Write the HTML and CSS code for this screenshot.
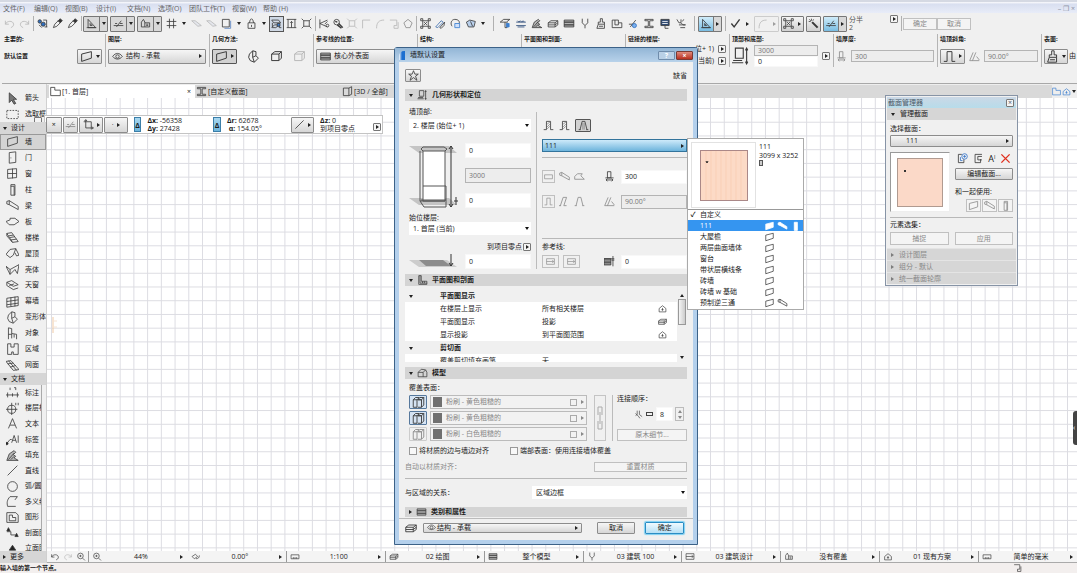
FILE: index.html
```html
<!DOCTYPE html>
<html lang="zh-CN">
<head>
  <meta charset="UTF-8">
  <meta name="viewport" content="width=device-width, initial-scale=1">
  <title>墙默认设置</title>
  <link rel="stylesheet" href="styles.css">
</head>
<body>
  <svg class="sprite" aria-hidden="true">
    <symbol id="undo" viewBox="0 0 16 16"><path d="M2 4v5h5M2 9c2-5 11-6 12 0 0 3-2 4-4 5"/></symbol>
    <symbol id="redo" viewBox="0 0 16 16"><path d="M14 4v5H9M14 9C12 4 3 3 2 9c0 3 2 4 4 5"/></symbol>
    <symbol id="find" viewBox="0 0 16 16"><circle cx="4" cy="5" r="2.5" fill="#2f6fc0"/><circle cx="9" cy="9" r="3" fill="#2f6fc0"/><path d="M9 3h5v10M11 13h4M3 10l4 4"/></symbol>
    <symbol id="pick" viewBox="0 0 16 16"><path d="M2 14l2-5 5-5 3 3-5 5z"/><path d="M9 4l3-3 3 3-3 3z" fill="#333"/></symbol>
    <symbol id="setsq" viewBox="0 0 16 16"><path d="M3 2v12h11zM6 8v3h3zM1 14h14"/></symbol>
    <symbol id="snapline" viewBox="0 0 16 16"><path d="M1 11h14M5 13L12 4M3 8h3M10 8h4"/></symbol>
    <symbol id="ruler" viewBox="0 0 16 16"><path d="M2 6l3-4 2 4v7H2zM7 7h7v6H7M9 9h3M9 11h3"/></symbol>
    <symbol id="hash" viewBox="0 0 16 16"><path d="M5 1v14M11 1v14M1 5h14M1 11h14"/></symbol>
    <symbol id="sheet" viewBox="0 0 16 16"><path d="M1 4l9 8 5-1-9-7z" fill="#ccd4e8"/></symbol>
    <symbol id="frame" viewBox="0 0 16 16"><path d="M2 2h10v11H2z"/><path d="M14 4v11H5" stroke="#5b83c0"/></symbol>
    <symbol id="lock" viewBox="0 0 16 16"><path d="M3 7h10v8H3zM5 7l1-4 2-2 2 2 1 4M8 10v3"/></symbol>
    <symbol id="fold" viewBox="0 0 16 16"><path d="M1 3h10l3 4H4zM2 7v7h5l5-4v4h3M5 10h6M1 14l4-4"/><path d="M9 8h4v4H9z" fill="#3c7fd0"/></symbol>
    <symbol id="dims" viewBox="0 0 16 16"><path d="M1 2h14M1 14h14M3 2v12M8 5v9M13 2v12M6 7l2-2 2 2"/></symbol>
    <symbol id="xpand" viewBox="0 0 16 16"><path d="M4 4h8v8H4zM1 1l3 3M15 1l-3 3M1 15l3-3M15 15l-3-3"/></symbol>
    <symbol id="trim" viewBox="0 0 16 16"><path d="M2 2v13M2 8l11-5M2 8l11 5M9 9l4-4"/><circle cx="13" cy="11" r="2"/></symbol>
    <symbol id="wrench" viewBox="0 0 16 16"><circle cx="6" cy="6" r="4"/><path d="M9 8l6 6M7 10l6 5M4 5l3 1" stroke-width="2"/></symbol>
    <symbol id="corner" viewBox="0 0 16 16"><path d="M3 15V3h11"/></symbol>
    <symbol id="origin" viewBox="0 0 16 16"><path d="M4 1v12h11M1 4h11v11M2 3l2-2 2 2M13 11l2 2-2 2"/></symbol>
    <symbol id="curve" viewBox="0 0 16 16"><path d="M3 15C3 7 6 3 14 3"/></symbol>
    <symbol id="box2" viewBox="0 0 16 16"><path d="M2 3h10v8H8v4h6V6"/></symbol>
    <symbol id="penta" viewBox="0 0 16 16"><path d="M8 2l6 5-3 7H5L2 7z"/></symbol>
    <symbol id="group" viewBox="0 0 16 16"><path d="M4 4h8v8H4zM1 1h3v3H1zM12 1h3v3h-3zM1 12h3v3H1zM12 12h3v3h-3zM6 6l4 4M10 6l-4 4"/></symbol>
    <symbol id="pencils" viewBox="0 0 16 16"><path d="M1 13l8-9 3 2-8 8z" stroke="#3f6fae"/><path d="M7 14l7-8-1 5-4 4z"/></symbol>
    <symbol id="cloud" viewBox="0 0 16 16"><path d="M3 12C0 8 2 2 7 2s8 3 6 7"/><path d="M7 8h7v6H7z" stroke="#3c7fd0" fill="#cfe0fa"/></symbol>
    <symbol id="tag" viewBox="0 0 16 16"><path d="M2 6l5-3 8 2-2 8H5z" fill="#b9d0ec"/><path d="M8 5l3 7"/></symbol>
    <symbol id="roofs" viewBox="0 0 16 16"><path d="M1 6l5-4h9L10 6zM8 6v8h3V6"/><path d="M10 8h4v5h-4z" fill="#3c7fd0" stroke="#3c7fd0"/></symbol>
    <symbol id="waves" viewBox="0 0 16 16"><path d="M1 6h14M1 11h14M3 4l2 2 2-2 2 2 2-2 2 2M3 13h10" stroke="#2b4a7a"/></symbol>
    <symbol id="fill" viewBox="0 0 16 16"><path d="M1 14L4 6l6-4 2 2-3 3 3 2-2 2 5 3z" fill="#b7b7b7"/><path d="M3 13l7-8M6 13l4-4"/></symbol>
    <symbol id="layers" viewBox="0 0 16 16"><path d="M1 7l4-3h10l-4 3zM1 10h10l4-3M1 13h10l4-3M1 7v6M11 7v6M15 4v6"/></symbol>
    <symbol id="hatch" viewBox="0 0 16 16"><path d="M1 3h14v10H1z" fill="#b4b4b4"/><path d="M1 6h14M1 10h14" stroke-width="1.6"/></symbol>
    <symbol id="fork" viewBox="0 0 16 16"><path d="M4 1v6l4 4 4-4V1M8 11v4"/></symbol>
    <symbol id="brush" viewBox="0 0 16 16"><path d="M7 1h3v5h3v3H4V6h3zM4 9l-2 6h11V9M5 12h6"/></symbol>
    <symbol id="rooms" viewBox="0 0 16 16"><path d="M1 3h9v4h5v7H1zM5 3v7h5V7"/></symbol>
    <symbol id="beamI" viewBox="0 0 16 16"><path d="M2 2h12v2H9v8h5v2H2v-2h5V4H2z"/></symbol>
    <symbol id="panel" viewBox="0 0 16 16"><path d="M2 2h12v9H2z" fill="#2f4a73"/><path d="M4 5h8M4 8h8" stroke="#fff"/><path d="M8 11v4h5"/></symbol>
    <symbol id="plug" viewBox="0 0 16 16"><path d="M2 2l3 5h3M8 2v5l3 3h4M5 10h9M7 14h7M12 2l-2 3"/></symbol>
    <symbol id="cut" viewBox="0 0 16 16"><path d="M2 9h9M4 13l8-10"/><circle cx="10" cy="11" r="3" fill="#7bb0ee" stroke="#2f6fc0"/></symbol>
    <symbol id="check" viewBox="0 0 16 16"><path d="M2 8l4 5 8-11" stroke-width="2"/></symbol>
    <symbol id="wand" viewBox="0 0 16 16"><path d="M6 6l8 8" stroke-width="3"/><path d="M5 1v3M1 5h3M2 2l2 2M8 2L7 4"/></symbol>
    <symbol id="eye" viewBox="0 0 16 16"><path d="M1 8c4-6 10-6 14 0-4 5-10 5-14 0z"/><circle cx="8" cy="8" r="2.5"/></symbol>
    <symbol id="star" viewBox="0 0 16 16"><path d="M8 1l2 5h5l-4 3 2 6-5-4-5 4 2-6-4-3h5z"/></symbol>
    <symbol id="cube" viewBox="0 0 16 16"><path d="M2 5l4-3h8v8l-3 3H2zM2 5h9v8M11 5l3-3"/></symbol>
    <symbol id="model" viewBox="0 0 16 16"><path d="M1 7l5-5 7 1 2 4v7H1zM1 7h8v7M9 7l4-4"/></symbol>
    <symbol id="cubes" viewBox="0 0 16 16"><path d="M1 5h5v10H1zM6 5l3-3H4L1 5M7 5l3-3h5l-3 3zM7 5h5v10H7M12 15l3-3V2"/></symbol>
    <symbol id="arrow" viewBox="0 0 16 16"><path d="M4 1v12l3-3 3 5 2-1-3-5h4z" fill="#777"/></symbol>
    <symbol id="marquee" viewBox="0 0 16 16"><path d="M1 3h14v10H1z" stroke-dasharray="2 1.5"/></symbol>
    <symbol id="wall" viewBox="0 0 16 16"><path d="M2 5l12-3v8L2 14z"/></symbol>
    <symbol id="door" viewBox="0 0 16 16"><path d="M4 2l8-1v13l-8 1zM6 8v1"/></symbol>
    <symbol id="window" viewBox="0 0 16 16"><path d="M2 3l11-1v11L2 14zM8 2v12M2 8h11"/></symbol>
    <symbol id="column" viewBox="0 0 16 16"><path d="M6 2h5v13H6zM6 4h4v11"/></symbol>
    <symbol id="beam" viewBox="0 0 16 16"><path d="M1 3l3-1 11 7v4L4 7 1 6zM4 2v5"/></symbol>
    <symbol id="slab" viewBox="0 0 16 16"><path d="M0 8l5-2V4l6 0 5 4-6 4H4z"/></symbol>
    <symbol id="stair" viewBox="0 0 16 16"><path d="M1 3l6-1 8 11-7 1zM3 6l6-1M5 8l6-1M6 11l7-1M1 3v3l7 8"/></symbol>
    <symbol id="roof" viewBox="0 0 16 16"><path d="M0 9l5-6 7-1-3 8-4 3zM12 2l4 8-3 1-2-4"/></symbol>
    <symbol id="shell" viewBox="0 0 16 16"><path d="M0 4l5 4 11-6-2 11-3-5-6 6zM5 8v6"/></symbol>
    <symbol id="skylight" viewBox="0 0 16 16"><path d="M1 4l6-2 8 5-6 2zM1 8l8 5 6-2M1 4v4M4 8l6-2"/></symbol>
    <symbol id="curtain" viewBox="0 0 16 16"><path d="M1 4l14-2v11L1 15zM6 3v11M11 2v12M1 8l14-2M1 12l14-2"/></symbol>
    <symbol id="morph" viewBox="0 0 16 16"><path d="M3 5l4-4 4 1v5l3 3-5 5-5-2-2-4zM7 1v8l2 6M7 9l4-2"/></symbol>
    <symbol id="chair" viewBox="0 0 16 16"><path d="M3 1l4 1v6l6 1v6M3 1v14M7 8v6M3 9h4M10 9v4"/></symbol>
    <symbol id="zone" viewBox="0 0 16 16"><path d="M2 1h4v4h4V1h5v13H9v-3H7v3H2z"/></symbol>
    <symbol id="mesh" viewBox="0 0 16 16"><path d="M0 3l6-1 10 11-7 1zM3 2l10 12M2 6l7-1M5 10l7-2"/></symbol>
    <symbol id="dim" viewBox="0 0 16 16"><path d="M0 11h16M2 8v6M8 9v4M14 8v6M5 2v3M10 2h2v3"/></symbol>
    <symbol id="level" viewBox="0 0 16 16"><circle cx="7" cy="9" r="5"/><path d="M7 1v15M0 9h14M12 1v3M15 1v3"/></symbol>
    <symbol id="letterA" viewBox="0 0 16 16"><path d="M3 14L8 2l5 12M5 10h6"/></symbol>
    <symbol id="labelA" viewBox="0 0 16 16"><path d="M0 14l5-6 2 0M7 12l3-9 3 9M8 9h4M15 3v9"/><circle cx="1" cy="13" r="1.5" fill="#222"/></symbol>
    <symbol id="line" viewBox="0 0 16 16"><path d="M2 14L14 2"/></symbol>
    <symbol id="circle" viewBox="0 0 16 16"><circle cx="8" cy="8" r="6"/></symbol>
    <symbol id="poly" viewBox="0 0 16 16"><path d="M14 2H5C1 6 1 10 2 14h10M14 2l-3 4"/></symbol>
    <symbol id="drawing" viewBox="0 0 16 16"><path d="M1 2h11l3 3v9H1zM4 5h4v3h4v4H4z"/></symbol>
    <symbol id="section" viewBox="0 0 16 16"><path d="M1 7h5v4h6"/><path d="M1 6l2-4 2 4zM11 13l2-4 2 4z" fill="#222"/></symbol>
    <symbol id="elev" viewBox="0 0 16 16"><path d="M4 10l4-6 4 6z" fill="#222"/><path d="M1 13h14"/></symbol>
    <symbol id="planview" viewBox="0 0 16 16"><path d="M2 1h4v9h9v5H2zM4 1v12h11M8 10v3M11 10v3"/></symbol>
    <symbol id="tabplan" viewBox="0 0 16 16"><path d="M1 2h6v4h8v8H1z"/></symbol>
    <symbol id="tab3d" viewBox="0 0 16 16"><path d="M2 3h8v11H2zM10 3l4-2v11l-4 2"/></symbol>
    <symbol id="zoomin" viewBox="0 0 16 16"><circle cx="7" cy="7" r="5"/><path d="M11 11l4 4M5 7h4M7 5v4"/></symbol>
    <symbol id="wallH" viewBox="0 0 16 16"><path d="M5 2h6v12M5 2v12M1 14h4M11 14h4"/><path d="M6 6l4-3M6 10l4-4M6 13l4-4" stroke="#888"/></symbol>
    <symbol id="wallT" viewBox="0 0 16 16"><path d="M6 2h4l3 12M6 2L3 14M1 14h3M12 14h3"/><path d="M7 4v10M9 4v10" stroke="#888"/></symbol>
    <symbol id="slant" viewBox="0 0 16 16"><path d="M2 14L6 2h5L7 14M0 14h3M7 14h4"/></symbol>
    <symbol id="trapez" viewBox="0 0 16 16"><path d="M6 2h4l3 12M6 2L3 14M1 14h3M12 14h3"/></symbol>
    <symbol id="wallO" viewBox="0 0 16 16"><path d="M5 2h6v12h4M5 2v12H1"/></symbol>
    <symbol id="angle" viewBox="0 0 16 16"><path d="M1 14L6 2M5 14l5-12M1 14h14M11 8l4 5"/></symbol>
    <symbol id="flat" viewBox="0 0 16 16"><path d="M1 5h14v7H1z"/></symbol>
    <symbol id="bent" viewBox="0 0 16 16"><path d="M1 12V8l4-4h7l-2 3 5 5z"/></symbol>
    <symbol id="thick" viewBox="0 0 16 16"><path d="M5 1h5v9H5zM2 10h12M3 13h10M3 13l2-2M3 13l2 2M13 13l-2-2M13 13l-2 2"/></symbol>
    <symbol id="copy" viewBox="0 0 16 16"><path d="M13 2H3v12h8V9M13 5H7v5h6"/></symbol>
    <symbol id="newcopy" viewBox="0 0 16 16"><path d="M7 2H2v12h8V9"/><circle cx="11" cy="5" r="4" stroke="#3473c8"/><path d="M9 5h4M11 3v4M5 6v5h3" stroke="#3473c8"/></symbol>
    <symbol id="cross" viewBox="0 0 16 16"><path d="M2 2l12 12M14 2L2 14" stroke-width="2"/></symbol>
    <symbol id="height" viewBox="0 0 16 16"><path d="M3 1h7v9H3zM0 14h10M1 12h8M13 1v14M12 3l1-2 1 2M12 13l1 2 1-2"/></symbol>
    <symbol id="refline" viewBox="0 0 16 16"><path d="M1 3h14v10H1zM1 8h12M11 6l3 2-3 2"/></symbol>
    <symbol id="offset" viewBox="0 0 16 16"><path d="M0 4h10v9H0z" fill="#8a8a8a"/><path d="M0 4h15M0 9h10M13 0v15M11 6h4"/></symbol>
    <symbol id="compass" viewBox="0 0 16 16"><path d="M1 8l6-4 4 4-6 4zM8 12c4 0 6-2 6-6"/></symbol>
    <symbol id="scale" viewBox="0 0 16 16"><path d="M1 5h14v7H1zM5 9v3M8 9v3M11 9v3"/></symbol>
    <symbol id="join" viewBox="0 0 20 16"><path d="M4 1v7l-3 2M8 1v7l5 4M1 6l5 5 3 4"/></symbol>
    <symbol id="house" viewBox="0 0 16 16"><path d="M2 8l6-5 6 5v6H2zM8 7v5M6 10h4"/></symbol>
    <symbol id="chain" viewBox="0 0 8 28"><path d="M2 11V3h4v8M2 17v8h4v-8M4 8v12"/></symbol>
  </svg>

  <header class="menubar">
    <nav>
      <a href="#">文件(F)</a><a href="#">编辑(Q)</a><a href="#">视图(B)</a><a href="#">设计(I)</a><a href="#">文档(N)</a><a href="#">选项(O)</a><a href="#" class="wide">团队工作(T)</a><a href="#">视窗(W)</a><a href="#">帮助 (H)</a>
    </nav>
    <span class="win-ctl">– ❐ ×</span>
  </header>

  <div class="toolbar">
    <svg class="i dim"><use href="#undo"/></svg><svg class="i dim"><use href="#redo"/></svg>
    <i class="sep"></i>
    <svg class="i"><use href="#find"/></svg><svg class="i"><use href="#pick"/></svg><svg class="i"><use href="#pick"/></svg>
    <i class="sep"></i>
    <span class="split"><button aria-label="辅助线"><svg class="i"><use href="#setsq"/></svg></button><button aria-label="更多"><i class="down"></i></button></span>
    <span class="split"><button aria-label="捕捉"><svg class="i"><use href="#snapline"/></svg></button><button aria-label="更多"><i class="down"></i></button></span>
    <span class="split"><button aria-label="标尺"><svg class="i"><use href="#ruler"/></svg></button><button aria-label="更多"><i class="down"></i></button></span>
    <svg class="i"><use href="#hash"/></svg><span class="caret"><i class="down"></i></span>
    <svg class="i dim"><use href="#sheet"/></svg><svg class="i dim"><use href="#sheet"/></svg>
    <svg class="i"><use href="#frame"/></svg><span class="caret"><i class="down"></i></span>
    <svg class="i"><use href="#lock"/></svg><span class="caret"><i class="down"></i></span>
    <button class="on" aria-label="描绘"><svg class="i"><use href="#fold"/></svg></button>
    <svg class="i"><use href="#dims"/></svg><svg class="i"><use href="#xpand"/></svg>
    <i class="sep"></i>
    <span class="tight">
      <svg class="i"><use href="#trim"/></svg><svg class="i"><use href="#wrench"/></svg><svg class="i dim"><use href="#xpand"/></svg><svg class="i dim"><use href="#corner"/></svg><svg class="i dim"><use href="#curve"/></svg><svg class="i dim"><use href="#box2"/></svg><svg class="i mid"><use href="#penta"/></svg>
    </span>
    <i class="sep"></i>
    <svg class="i"><use href="#group"/></svg><svg class="i"><use href="#pencils"/></svg><svg class="i"><use href="#cloud"/></svg><svg class="i"><use href="#tag"/></svg><span class="caret"><i class="down"></i></span>
    <i class="sep far"></i>
    <span class="loose">
      <svg class="i"><use href="#roofs"/></svg><svg class="i"><use href="#waves"/></svg><svg class="i"><use href="#fill"/></svg><svg class="i"><use href="#layers"/></svg><svg class="i"><use href="#hatch"/></svg><svg class="i"><use href="#fork"/></svg><svg class="i"><use href="#brush"/></svg><svg class="i"><use href="#rooms"/></svg><svg class="i"><use href="#cut"/></svg><svg class="i"><use href="#beamI"/></svg><svg class="i"><use href="#panel"/></svg><svg class="i"><use href="#plug"/></svg>
    </span>
    <i class="sep far"></i>
    <span class="split blue"><button aria-label="三角板"><svg class="i"><use href="#setsq"/></svg></button><button aria-label="更多"><i class="right"></i></button></span>
    <i class="sep"></i>
    <span class="split plain"><button aria-label="确认"><svg class="i"><use href="#check"/></svg></button><button aria-label="更多"><i class="right"></i></button></span>
    <span class="split off"><button aria-label="曲线" disabled><svg class="i dim"><use href="#curve"/></svg></button><button aria-label="更多" disabled><i class="right"></i></button></span>
    <span class="split light"><button aria-label="组"><svg class="i"><use href="#group"/></svg></button><button aria-label="更多"><i class="right"></i></button></span>
    <span class="split light"><button aria-label="魔棒"><svg class="i"><use href="#wand"/></svg></button></span>
    <span class="split blue"><button aria-label="吸附"><svg class="i"><use href="#snapline"/></svg></button><button aria-label="更多"><i class="right"></i></button></span>
    <span class="half">分半<br>2</span>
    <button class="pop" aria-label="展开"><i class="right"></i></button>
    <i class="sep"></i>
    <button class="flat" disabled>确定</button><button class="flat" disabled>取消</button>
  </div>

  <div class="infobar">
    <section>
      <h2>主要的:</h2>
      <div class="row between"><b>默认设置</b><button class="btn chip" aria-label="墙"><svg class="i"><use href="#wall"/></svg><i class="down"></i></button></div>
    </section>
    <section>
      <h2>图层:</h2>
      <div class="row"><button class="btn grow"><svg class="i"><use href="#eye"/></svg>结构 - 承载<i class="right end"></i></button></div>
    </section>
    <section>
      <h2>几何方法:</h2>
      <div class="row spread"><button class="btn chip pressed" aria-label="直墙"><svg class="i"><use href="#wall"/></svg><i class="right"></i></button><svg class="i"><use href="#morph"/></svg><svg class="i"><use href="#cube"/></svg><svg class="i dim"><use href="#cube"/></svg></div>
    </section>
    <section>
      <h2>参考线的位置:</h2>
      <div class="row"><button class="btn grow"><svg class="i"><use href="#hatch"/></svg>核心外表面<i class="right end"></i></button></div>
    </section>
    <section><h2>结构:</h2></section>
    <section><h2>平面图和剖面:</h2></section>
    <section>
      <h2>链接的楼层:</h2>
      <div class="stories"><span>位+ 1)</span><button class="pop" aria-label="展开"><i class="right"></i></button><span>当前)</span><button class="pop" aria-label="展开"><i class="right"></i></button></div>
    </section>
    <section>
      <h2>顶部和底部:</h2>
      <div class="row"><svg class="i big"><use href="#height"/></svg><div class="stack"><input aria-label="高度" value="3000" disabled><input aria-label="底部" value="0"></div><button class="pop" aria-label="展开"><i class="right"></i></button></div>
    </section>
    <section>
      <h2>墙厚度:</h2>
      <div class="row"><svg class="i mid"><use href="#thick"/></svg><input aria-label="墙厚度" value="300" disabled></div>
    </section>
    <section>
      <h2>墙顶斜角:</h2>
      <div class="row"><button class="btn chip" aria-label="斜角"><svg class="i"><use href="#wallO"/></svg><i class="right"></i></button><svg class="i mid"><use href="#angle"/></svg><input aria-label="角度" value="90.00°" disabled></div>
    </section>
    <section class="surface">
      <h2>表面:</h2>
      <div class="row"><button class="btn chip" aria-label="表面"><svg class="i"><use href="#brush"/></svg><i class="down"></i></button>由</div>
    </section>
  </div>

  <main>
    <aside class="toolbox">
      <ul class="pickers">
        <li><svg class="i"><use href="#arrow"/></svg>箭头</li>
        <li><svg class="i"><use href="#marquee"/></svg>选取框</li>
      </ul>
      <h3><i class="down"></i>设计</h3>
      <ul class="design">
        <li class="active"><svg class="i"><use href="#wall"/></svg>墙</li>
        <li><svg class="i"><use href="#door"/></svg>门</li>
        <li><svg class="i"><use href="#window"/></svg>窗</li>
        <li><svg class="i"><use href="#column"/></svg>柱</li>
        <li><svg class="i"><use href="#beam"/></svg>梁</li>
        <li><svg class="i"><use href="#slab"/></svg>板</li>
        <li><svg class="i"><use href="#stair"/></svg>楼梯</li>
        <li><svg class="i"><use href="#roof"/></svg>屋顶</li>
        <li><svg class="i"><use href="#shell"/></svg>壳体</li>
        <li><svg class="i"><use href="#skylight"/></svg>天窗</li>
        <li><svg class="i"><use href="#curtain"/></svg>幕墙</li>
        <li><svg class="i"><use href="#morph"/></svg>变形体</li>
        <li><svg class="i"><use href="#chair"/></svg>对象</li>
        <li><svg class="i"><use href="#zone"/></svg>区域</li>
        <li><svg class="i"><use href="#mesh"/></svg>网面</li>
      </ul>
      <h3><i class="down"></i>文档</h3>
      <ul class="document">
        <li><svg class="i"><use href="#dim"/></svg>标注</li>
        <li><svg class="i"><use href="#level"/></svg>楼层标</li>
        <li><svg class="i"><use href="#letterA"/></svg>文本</li>
        <li><svg class="i"><use href="#labelA"/></svg>标签</li>
        <li><svg class="i"><use href="#fill"/></svg>填充</li>
        <li><svg class="i"><use href="#line"/></svg>直线</li>
        <li><svg class="i"><use href="#circle"/></svg>弧/圆</li>
        <li><svg class="i"><use href="#poly"/></svg>多义线</li>
        <li><svg class="i"><use href="#drawing"/></svg>图形</li>
        <li><svg class="i"><use href="#section"/></svg>剖面图</li>
        <li><svg class="i"><use href="#elev"/></svg>立面图</li>
      </ul>
      <h3 class="more"><i class="right"></i>更多</h3>
    </aside>

    <div class="workspace">
      <div class="tabs">
        <span class="tab current"><svg class="i"><use href="#tabplan"/></svg>[1. 首层]<button aria-label="关闭">×</button></span>
        <span class="tab"><svg class="i"><use href="#beamI"/></svg>[自定义截面]</span>
        <span class="tab"><svg class="i"><use href="#tab3d"/></svg>[3D / 全部]</span>
        <span class="nav-home"><svg class="i"><use href="#tabplan"/></svg><svg class="i"><use href="#house"/></svg><i class="down"></i></span>
      </div>
      <div class="canvas">
        <svg class="grid" aria-hidden="true">
          <defs><pattern id="cell" x="4" y="10" width="13.73" height="13.73" patternUnits="userSpaceOnUse"><path d="M.5 0v13.73M0 .5h13.73" fill="none" stroke="#dcdce2"/></pattern></defs>
          <rect width="100%" height="100%" fill="url(#cell)"/>
          <path d="M6 219v16" stroke="#efc9a4" stroke-width="1" fill="none"/>
          <path d="M5 223h5M5 229h5" stroke="#f6e3d2" fill="none"/>
        </svg>
        <span class="edge-tab">‹</span>
      </div>
      <footer class="statusbar">
        <div class="zooms"><svg class="i"><use href="#undo"/></svg><svg class="i dim"><use href="#redo"/></svg><svg class="i"><use href="#zoomin"/></svg></div>
        <div><svg class="i"><use href="#zoomin"/></svg><span>44%</span><i class="right"></i></div>
        <div class="open"><svg class="i"><use href="#compass"/></svg><span>0.00°</span><i class="right"></i></div>
        <div><svg class="i"><use href="#scale"/></svg><span>1:100</span><i class="right"></i></div>
        <div><svg class="i"><use href="#layers"/></svg><span>02 绘图</span><i class="right"></i></div>
        <div><svg class="i"><use href="#hatch"/></svg><span>整个模型</span><i class="right"></i></div>
        <div><svg class="i"><use href="#fork"/></svg><span>03 建筑 100</span><i class="right"></i></div>
        <div><svg class="i"><use href="#refline"/></svg><span>03 建筑设计</span><i class="right"></i></div>
        <div><svg class="i"><use href="#ruler"/></svg><span>没有覆盖</span><i class="right"></i></div>
        <div><svg class="i"><use href="#house"/></svg><span>01 现有方案</span><i class="right"></i></div>
        <div><svg class="i"><use href="#scale"/></svg><span>简单的毫米</span><i class="right"></i></div>
      </footer>
    </div>
  </main>
  <div class="hint"><span>输入墙的第一个节点。</span><svg class="i"><use href="#box2"/></svg></div>

  <!-- coordinate tracker -->
  <div class="tracker">
    <button class="btn" aria-label="关闭">×</button>
    <button class="btn" aria-label="网格"><svg class="i mid"><use href="#snapline"/></svg></button>
    <button class="btn wide" aria-label="原点"><svg class="i"><use href="#origin"/></svg><i class="right"></i></button>
    <button class="btn wide" aria-label="点">·<i class="right"></i></button>
    <b class="delta">Δ</b>
    <p><b>Δx:</b> -56358<br><b>Δy:</b> 27428</p>
    <b class="delta">Δ</b>
    <p><b>Δr:</b> 62678<br>&nbsp;<b>α:</b> 154.05°</p>
    <button class="btn wide" aria-label="高程"><svg class="i"><use href="#line"/></svg><i class="right"></i></button>
    <p class="last"><b>Δz:</b> 0<br>到项目零点</p>
    <button class="pop" aria-label="展开"><i class="right"></i></button>
  </div>
  <button class="pop tracker-pin" aria-label="固定"></button>

  <!-- wall settings dialog -->
  <div class="dialog" role="dialog" aria-label="墙默认设置">
    <div class="titlebar"><i class="logo"></i><span>墙默认设置</span><button aria-label="帮助">?</button><button class="close" aria-label="关闭">×</button></div>
    <div class="body">
      <div class="fav"><button class="btn" aria-label="收藏"><svg class="i"><use href="#star"/></svg></button><span>缺省</span></div>

      <h4><i class="down"></i><svg class="i"><use href="#height"/></svg>几何形状和定位</h4>
      <div class="geometry">
        <div class="left">
          <label for="top">墙顶部:</label>
          <div class="drop"><select id="top"><option>2. 楼层 (始位+ 1)</option></select></div>
          <div class="model">
            <svg class="wall-pic" viewBox="0 0 50 66" aria-hidden="true">
              <path d="M0 3h40l8 7H10zM0 55h40l8 7H10z" fill="#c4c4c4"/>
              <path d="M14 8h22v50H14z" fill="#fff" stroke="#555"/>
              <path d="M14 8l-2-2 2-2h21l3 2-2 2M11 8v50M14 43h23v14M11 58l4 6h22v-7H12M11 58h25" fill="none" stroke="#555"/>
              <path d="M42 3v61M40 6l2-3 2 3M40 61l2 3 2-3M47 54v8M45 58h4" fill="none" stroke="#333"/>
            </svg>
            <div class="inputs"><input aria-label="顶部偏移" value="0"><input aria-label="墙高" value="3000" disabled><input aria-label="底部偏移" value="0"></div>
          </div>
          <label for="home">始位楼层:</label>
          <div class="drop"><select id="home"><option>1. 首层 (当前)</option></select></div>
          <div class="zero"><label for="elev0">到项目零点</label><button class="pop" aria-label="选择"><i class="right"></i></button></div>
          <div class="base">
            <svg class="base-pic" viewBox="0 0 50 14" aria-hidden="true"><path d="M0 6h38l10 7H10z" fill="#ccc"/><path d="M10 6h24l8 6H17z" fill="#8c8c8c"/><path d="M42 0v12M40 9l2 3 2-3" fill="none" stroke="#333"/></svg>
            <input id="elev0" value="0">
          </div>
        </div>
        <div class="side">
          <div class="shapes"><svg class="i"><use href="#wallH"/></svg><svg class="i"><use href="#wallH"/></svg><button class="btn pressed" aria-label="复合截面"><svg class="i"><use href="#wallT"/></svg></button></div>
          <button class="profile">111<i class="right"></i></button>
          <hr>
          <div class="param"><span class="trio"><svg class="i boxed"><use href="#flat"/></svg><svg class="i"><use href="#beam"/></svg><svg class="i"><use href="#bent"/></svg></span><svg class="i"><use href="#thick"/></svg><input aria-label="厚度" value="300"></div>
          <div class="param second"><span class="trio"><svg class="i boxed"><use href="#wallO"/></svg><svg class="i"><use href="#slant"/></svg><svg class="i"><use href="#trapez"/></svg></span><svg class="i mid"><use href="#angle"/></svg><input aria-label="倾角" value="90.00°" disabled></div>
          <hr class="low">
          <label for="ref">参考线:</label>
          <div class="param ref"><span class="trio"><svg class="i boxed"><use href="#refline"/></svg><svg class="i boxed"><use href="#refline"/></svg></span><svg class="i"><use href="#offset"/></svg><input id="ref" value="0"></div>
        </div>
      </div>

      <h4><i class="down"></i><svg class="i"><use href="#planview"/></svg>平面图和剖面</h4>
      <div class="props">
        <table>
          <tr class="head"><td><i class="down"></i></td><th colspan="3">平面图显示</th></tr>
          <tr><td></td><td>在楼层上显示</td><td>所有相关楼层</td><td><svg class="i"><use href="#house"/></svg></td></tr>
          <tr><td></td><td>平面图显示</td><td>投影</td><td><svg class="i"><use href="#layers"/></svg></td></tr>
          <tr><td></td><td>显示投影</td><td>到平面图范围</td><td><svg class="i"><use href="#house"/></svg></td></tr>
          <tr class="head"><td><i class="down"></i></td><th colspan="3">剪切面</th></tr>
          <tr><td></td><td>覆盖剪切填充画笔</td><td>无</td><td></td></tr>
        </table>
        <div class="scroll"><i class="up"></i><b></b><i class="down"></i></div>
      </div>

      <h4><i class="down"></i><svg class="i"><use href="#model"/></svg>模型</h4>
      <div class="surfaces">
        <p>覆盖表面：</p>
        <div class="cover">
          <div class="finishes">
            <div><button class="btn tint" aria-label="外表面"><svg class="i"><use href="#cubes"/></svg></button><button class="finish" disabled><i class="swatch"></i>粉刷 - 黄色粗糙的<em></em><i class="right"></i></button></div>
            <div><button class="btn tint" aria-label="边缘"><svg class="i"><use href="#cubes"/></svg></button><button class="finish" disabled><i class="swatch"></i>粉刷 - 黄色粗糙的<em></em><i class="right"></i></button></div>
            <div><button class="btn faint" aria-label="内表面"><svg class="i mid"><use href="#cubes"/></svg></button><button class="finish" disabled><i class="swatch"></i>粉刷 - 白色粗糙的<em></em><i class="right"></i></button></div>
          </div>
          <div class="link"><svg><use href="#chain"/></svg></div>
          <div class="order">
            <label for="order">连接顺序：</label>
            <div class="spin"><svg class="i"><use href="#join"/></svg><i class="plate"></i><input id="order" value="8"><span><i class="up"></i><i class="down"></i></span></div>
            <button class="flat" disabled>原木细节...</button>
          </div>
        </div>
        <div class="checks"><label><input type="checkbox">将材质的边与墙边对齐</label><label><input type="checkbox">端部表面：使用连接墙体覆盖</label></div>
        <div class="align"><span>自动以材质对齐：</span><button class="flat" disabled>重置材质</button></div>
        <hr>
        <div class="relation"><label for="zone-rel">与区域的关系：</label><div class="drop"><select id="zone-rel"><option>区域边框</option></select></div></div>
      </div>

      <h4 class="closed"><i class="right"></i><svg class="i"><use href="#hatch"/></svg>类别和属性</h4>
      <div class="actions">
        <svg class="i"><use href="#layers"/></svg>
        <button class="btn layer"><svg class="i"><use href="#eye"/></svg>结构 - 承载<i class="right end"></i></button>
        <button class="btn">取消</button>
        <button class="btn ok">确定</button>
      </div>
    </div>
  </div>

  <!-- profile pop-up -->
  <div class="popup">
    <div class="info">
      <div class="preview"><svg viewBox="0 0 48 51" aria-hidden="true"><rect x=".5" y=".5" width="47" height="50" fill="#fcdac6" stroke="#a88"/><path d="M6 1v49M11 1v49M16 1v49M21 1v49M26 1v49M31 1v49M36 1v49M41 1v49" stroke="#f9cfb6"/><path d="M6 11l1 2 1-2" fill="none" stroke="#222"/></svg></div>
      <p>111<br>3099 x 3252<br><i class="doc"></i></p>
    </div>
    <ul>
      <li><i>✓</i><span>自定义</span></li>
      <li class="selected"><i></i><span>111</span><svg class="i solid"><use href="#wall"/></svg><svg class="i solid"><use href="#beam"/></svg><svg class="i solid"><use href="#column"/></svg></li>
      <li><i></i><span>大屋檐</span><svg class="i"><use href="#wall"/></svg></li>
      <li><i></i><span>两层曲面墙体</span><svg class="i"><use href="#wall"/></svg></li>
      <li><i></i><span>窗台</span><svg class="i"><use href="#wall"/></svg></li>
      <li><i></i><span>带状层横线条</span><svg class="i"><use href="#wall"/></svg></li>
      <li><i></i><span>砖墙</span><svg class="i"><use href="#wall"/></svg></li>
      <li><i></i><span>砖墙 w 基础</span><svg class="i"><use href="#wall"/></svg></li>
      <li><i></i><span>预制逆三通</span><svg class="i"><use href="#wall"/></svg><svg class="i"><use href="#beam"/></svg></li>
    </ul>
  </div>

  <!-- profile manager palette -->
  <div class="palette">
    <div class="cap"><span>截面管理器</span><button class="pop" aria-label="关闭">×</button></div>
    <h5><i class="down"></i>管理截面</h5>
    <div class="content">
      <p>选择截面：</p>
      <button class="btn choose">111<i class="right end"></i></button>
      <div class="edit">
        <div class="thumb"><i></i></div>
        <div class="tools">
          <div class="icons"><svg class="i"><use href="#newcopy"/></svg><svg class="i"><use href="#copy"/></svg><span>A<sup>I</sup></span><svg class="i red"><use href="#cross"/></svg></div>
          <button class="btn">编辑截面...</button>
          <p>和一起使用:</p>
          <div class="uses"><button class="flat" aria-label="墙"><svg class="i mid"><use href="#wall"/></svg></button><button class="flat" aria-label="梁"><svg class="i mid"><use href="#beam"/></svg></button><button class="flat" aria-label="柱"><svg class="i mid"><use href="#column"/></svg></button></div>
        </div>
      </div>
      <hr>
      <p>元素选集：</p>
      <div class="pair"><button class="flat" disabled>捕捉</button><button class="flat" disabled>应用</button></div>
    </div>
    <h5 class="closed"><i class="right"></i>设计图层</h5>
    <h5 class="closed"><i class="right"></i>组分 - 默认</h5>
    <h5 class="closed"><i class="right"></i>统一截面轮廓</h5>
  </div>
</body>
</html>
```
FILE: styles.css
```css
* { box-sizing: border-box; margin: 0; padding: 0; }
body { height: 100vh; display: flex; flex-direction: column; position: relative; overflow: hidden; background: #f0f0f0; color: #1c1c1c; font: 7px/8px "Open Sans", "Noto Sans CJK SC", sans-serif; white-space: nowrap; }
button, input, select { font: inherit; color: inherit; border: 0; background: none; appearance: none; border-radius: 0; min-width: 0; }
ul { list-style: none; }
a { color: inherit; text-decoration: none; }
i, em { font-style: normal; flex: none; }
h2, h3, h4, h5 { font-size: 7px; line-height: 8px; }
hr { border: 0; border-top: 1px solid #b8b8b8; }

.sprite { position: absolute; width: 0; height: 0; }
.i { width: 11px; height: 11px; flex: none; fill: none; stroke: #3a3a3a; stroke-width: 1.2; }
.dim { opacity: .3; }
.mid { opacity: .55; }

.down, .right, .up { display: inline-block; width: 0; height: 0; border: 2px solid transparent; }
.down { border-top: 3px solid #222; border-bottom: 0; }
.up { border-bottom: 3px solid #222; border-top: 0; }
.right { border-left: 3px solid #222; border-right: 0; }
.end { margin-left: auto; }

.btn { display: flex; align-items: center; justify-content: center; height: 12px; border: 1px solid #8c8c8c; border-radius: 1px; background: linear-gradient(#f6f6f6, #d6d6d6); }
.btn.pressed { background: #d2d2d2; border-color: #555; }
.flat { height: 12px; border: 1px solid #c0c0c0; background: #f4f4f4; color: #888; text-align: center; }
.pop { display: flex; align-items: center; justify-content: center; width: 8px; height: 8px; border: 1px solid #777; border-radius: 1px; background: #f4f4f4; flex: none; line-height: 6px; }
input { height: 14px; padding: 0 3px; background: #fff; border: 1px solid #f8f8f8; }
input:disabled { background: #ededed; border-color: #b4b4b4; color: #777; }

/* menu bar */
.menubar { height: 13px; display: flex; justify-content: space-between; padding: 4px 2px 0 3px; border-top: 2px solid #d5d9e3; background: linear-gradient(#fbfbfd, #d9dff0 20%, #e8ecf8); color: #666; }
.menubar nav { display: flex; }
.menubar a { width: 31px; line-height: 5px; }
.menubar a.wide { width: 43px; }
.win-ctl { color: #8c93a5; line-height: 5px; }

/* toolbar */
.toolbar { height: 21px; display: flex; align-items: center; padding-left: 2px; }
.toolbar .i { width: 15px; height: 11px; }
.toolbar .tight, .toolbar .loose { display: flex; }
.toolbar .tight .i { width: 14px; }
.toolbar .loose .i { width: 16px; }
.sep { width: 1px; height: 15px; margin: 0 1px; background: #b0b0b0; }
.sep.far { margin: 0 3px 0 5px; }
.caret { width: 10px; display: flex; justify-content: center; }
.split { display: flex; height: 16px; margin-right: 2px; border: 1px solid #777; border-radius: 1px; background: #d8d8d8; flex: none; }
.split button { display: flex; align-items: center; justify-content: center; }
.split button + button { width: 8px; border-left: 1px solid #777; }
.split .i { width: 15px; }
.split.blue button:first-child { background: linear-gradient(#d0ecfa, #79bde2); }
.split.blue .i { width: 14px; }
.split.plain, .split.off { border-color: transparent; background: none; }
.split.off { border-color: #ccc; }
.split.off .right { opacity: .4; }
.split.plain button, .split.off button, .split.light button { border: 0; }
.split.light { background: linear-gradient(#f4f4f4, #d0d0d0); }
.split.light .i { width: 13px; }
.on { height: 16px; border: 1px solid #555; background: #cfd8e4; display: flex; align-items: center; }
.on .i { width: 13px; }
.half { width: 41px; color: #555; }
.toolbar .pop { margin-right: 2px; align-self: flex-start; margin-top: 2px; }
.toolbar .flat { width: 34px; }

/* info box */
.infobar { height: 50px; display: flex; margin-left: 2px; border-bottom: 1px solid #a8a8a8; overflow: hidden; }
.infobar section { flex: 0 0 104px; height: 33px; padding: 1px 3px 0 2px; border-right: 1px solid #b4b4b4; }
.infobar section:last-child { border-right: 0; }
.infobar h2 { font-size: 6px; }
.infobar .row { display: flex; align-items: center; gap: 4px; height: 24px; margin-top: 1px; }
.infobar .between { justify-content: space-between; }
.infobar .spread { gap: 10px; }
.infobar .spread .i { width: 13px; height: 13px; }
.infobar b { font-size: 6px; }
.infobar .btn { height: 15px; gap: 3px; padding: 0 3px; }
.infobar .chip { width: 25px; }
.infobar .chip .i { width: 13px; height: 13px; }
.infobar .grow { flex: 1; justify-content: flex-start; }
.infobar .surface .row { gap: 1px; }
.infobar .surface .chip { width: 24px; }
.infobar .big { width: 18px; height: 18px; stroke-width: 1; }
.infobar input { height: 12px; flex: 1; width: 20px; }
.infobar .stack { display: flex; flex-direction: column; flex: 1; }
.infobar .stack input { flex: none; width: 100%; height: 11px; }
.stories { display: grid; grid-template-columns: 1fr 8px; gap: 4px; padding-top: 2px; text-align: right; }

/* main area */
main { flex: 1; display: flex; min-height: 0; }
.toolbox { width: 47px; display: flex; flex-direction: column; overflow: hidden; border-right: 1px solid #d0d0d0; padding-top: 6px; }
.toolbox li { display: flex; align-items: center; gap: 7px; padding-left: 6px; min-height: 0; }
.toolbox li .i { width: 13px; height: 13px; margin-right: -1px; stroke-width: 1; }
.toolbox h3 { display: flex; align-items: center; gap: 4px; height: 12px; padding-left: 3px; background: #d6d6d6; flex: none; font-weight: 400; z-index: 1; }
.pickers li { height: 16px; }
.design { flex: 7; display: grid; grid-template-rows: repeat(15, 1fr); min-height: 0; }
.design .active { border: 1px solid #999; background: #d4d4d4; padding-left: 5px; }
.document { flex: 5; display: grid; grid-template-rows: repeat(11, 1fr); min-height: 0; margin: 0 4px -5px 0; overflow: hidden; border-right: 1px solid #aaa; }
.workspace { flex: 1; display: flex; flex-direction: column; min-width: 0; }
.tabs { display: flex; height: 14px; background: #d9d9d9; padding-left: 2px; border-top: 1px solid #eee; }
.tab { width: 146px; display: flex; align-items: center; gap: 1px; padding: 0 4px 0 1px; }
.tab.current { background: #fff; }
.tab button { margin-left: auto; }
.nav-home { margin-left: auto; display: flex; align-items: center; gap: 1px; width: 25px; background: #eee; }
.nav-home .i { width: 9px; height: 9px; stroke: #3c7fd0; }
.canvas { flex: 1; position: relative; background: #fff; min-height: 0; }
.grid { display: block; width: 100%; height: 100%; }
.edge-tab { position: absolute; right: 0; top: 313px; width: 4px; height: 34px; border-radius: 3px 0 0 3px; background: #444; color: #fff; line-height: 33px; }
.statusbar { display: flex; height: 12px; background: #f4f4f4; border-bottom: 1px solid #aaa; }
.statusbar div { flex: 1; display: flex; align-items: center; border-left: 1px solid #999; padding: 0 4px 0 3px; }
.statusbar div.open, .statusbar div.zooms { border-left-color: transparent; }
.statusbar .zooms { flex: 0 0 41px; gap: 3px; padding: 0 2px; }
.statusbar span { flex: 1; text-align: center; }
.statusbar .i { width: 10px; height: 9px; }
.hint { height: 10px; display: flex; justify-content: space-between; padding-right: 54px; background: #f3efee; font-size: 6px; line-height: 11px; font-weight: 600; }
.hint .i { height: 9px; }

/* coordinate tracker */
.tracker { position: absolute; left: 44px; top: 115px; width: 339px; height: 19px; display: flex; align-items: center; gap: 1px; padding: 0 1px; border: 1px solid #c4c4c4; background: #fff; }
.tracker .btn { width: 16px; height: 16px; gap: 3px; }
.tracker .btn.wide { width: 24px; }
.tracker p { width: 69px; padding-left: 5px; }
.tracker p.last { width: 58px; }
.delta { width: 8px; height: 15px; margin-left: 2px; border: 1px solid #3b7ea8; background: linear-gradient(#a9d8f0, #6cb5dc); line-height: 15px; text-align: center; }
.tracker .delta:first-of-type { margin-left: 5px; }
.tracker .pop { margin: 4px 0 0 auto; }
.tracker-pin { position: absolute; left: 34px; top: 117px; }

/* dialog */
.dialog { position: absolute; left: 394px; top: 47px; width: 304px; padding: 0 4px 4px; border: 1px solid #3c6288; border-radius: 3px 3px 0 0; background: #b4d0ec; }
.titlebar { display: flex; align-items: center; height: 14px; gap: 5px; margin: 0 -4px; padding: 0 4px; background: linear-gradient(#93b6d6, #b8d2ea); }
.titlebar .logo { width: 6px; height: 9px; border-radius: 5px 0 0; background: linear-gradient(90deg, #fff, #1d6fd0 50%); }
.titlebar span { flex: 1; }
.titlebar button { width: 17px; height: 9px; border: 1px solid #6f8cab; border-radius: 1px; background: #b9d0e6; color: #fff; line-height: 7px; font-weight: 700; }
.titlebar .close { margin-left: -4px; background: linear-gradient(#e08a7c, #b83020); border-color: #7a3a34; }
.dialog .body { background: #f0f0f0; padding: 0 6px; }
.fav { display: flex; justify-content: space-between; align-items: center; height: 27px; }
.fav .btn { width: 16px; height: 13px; }
.dialog h4 { display: flex; align-items: center; gap: 4px; height: 12px; padding-left: 4px; background: #d4d4d4; }
.dialog h4 .i { width: 11px; height: 10px; }
.dialog h4.closed { height: 10px; }
.drop { position: relative; height: 13px; background: #fff; }
.drop::after { content: ""; position: absolute; right: 2px; top: 5px; border: 2px solid transparent; border-top: 3px solid #111; border-bottom: 0; pointer-events: none; }
.drop select { display: block; width: 100%; height: 100%; padding: 0 4px; }
.dialog label { display: block; }

.geometry { display: grid; grid-template-columns: 131px 1fr; height: 173px; }
.geometry .left { padding: 7px 5px 0 4px; }
.geometry .left .drop { margin-top: 3px; }
.model { display: flex; justify-content: space-between; margin: 11px 0 5px; }
.wall-pic { width: 50px; height: 66px; }
.inputs { display: flex; flex-direction: column; gap: 10px; }
.inputs input, .base input { width: 66px; height: 15px; }
.geometry .model ~ .drop { margin-top: 0; }
.zero { display: flex; align-items: center; justify-content: flex-end; gap: 1px; margin: 7px 0 2px; height: 10px; }
.base { display: flex; justify-content: space-between; }
.base-pic { width: 50px; height: 14px; }
.side { margin: 11px 0 7px; padding: 7px 0 0 5px; border-left: 1px solid #bbb; }
.shapes { display: flex; align-items: center; gap: 5px; height: 13px; padding-left: 1px; }
.shapes .btn { width: 16px; height: 13px; }
.profile { display: flex; align-items: center; justify-content: space-between; width: 100%; height: 13px; margin: 7px 0 5px; padding: 0 2px; border: 1px solid #33749c; background: linear-gradient(#cdeafa, #6db4dc); }
.param { display: flex; align-items: center; margin: 11px 0 10px; height: 15px; }
.param.second { margin: 0 0 29px; }
.trio { display: flex; align-items: center; gap: 4px; width: 62px; opacity: .55; }
.boxed { width: 13px; height: 13px; border: 1px solid #999; padding: 1px; }
.param input { flex: 1; width: 60px; margin-left: 6px; }
.low { margin-bottom: 4px; }
.param.ref { margin: 3px 0 0; }
.ref .boxed { width: 17px; }

.props { display: flex; height: 76px; margin-bottom: 5px; overflow: hidden; }
.props table { flex: 1; margin-top: 3px; border-collapse: collapse; table-layout: fixed; background: #fff; }
.props td, .props th { height: 13px; text-align: left; vertical-align: middle; line-height: 8px; }
.props td:first-child { width: 35px; padding-left: 4px; }
.props td:nth-child(2) { width: 102px; }
.props td:nth-child(4) { width: 20px; }
.props .head { background: #f0f0f0; }
.props .i { display: block; height: 9px; }
.scroll { width: 10px; display: flex; flex-direction: column; align-items: center; padding: 8px 0 3px; }
.scroll b { width: 8px; height: 26px; margin: 2px 0 auto; border: 1px solid #999; background: linear-gradient(90deg, #f4f4f4, #ccc); }

.surfaces { padding: 5px 0 8px; }
.surfaces > p { padding-left: 4px; margin-bottom: 3px; }
.cover { display: flex; padding-left: 4px; }
.finishes { display: flex; flex-direction: column; gap: 2px; width: 178px; }
.finishes div { display: flex; gap: 3px; }
.finishes .btn { width: 18px; height: 14px; }
.finishes .i { width: 13px; height: 12px; }
.finishes .tint { background: #d5e3f3; border-color: #56789c; }
.finishes .faint { background: #f0f0f0; border-color: #ccc; }
.finish { flex: 1; display: flex; align-items: center; gap: 4px; height: 14px; padding: 0 2px; border: 1px solid #bbb; background: #f2f2f2; color: #888; }
.swatch { width: 9px; height: 10px; background: #707070; }
.finish em { width: 7px; height: 7px; margin-left: auto; border: 1px solid #aaa; }
.finish .right { opacity: .5; }
.link { display: flex; align-items: center; justify-content: center; width: 12px; margin: 0 6px 0 7px; border: 1px solid #c4c4c4; }
.link svg { width: 8px; height: 28px; fill: none; stroke: #aaa; }
.order { flex: 1; display: flex; flex-direction: column; padding-left: 4px; border-left: 1px solid #bbb; }
.spin { display: flex; align-items: center; height: 14px; margin: 4px 0 8px; padding-left: 18px; }
.spin .plate { width: 7px; height: 4px; margin-right: 3px; border: 1px solid #444; }
.spin input { width: 17px; margin-right: 2px; }
.spin span { display: flex; flex-direction: column; align-items: center; justify-content: space-around; width: 9px; height: 14px; border: 1px solid #bbb; }
.spin span i { opacity: .5; }
.checks { display: flex; margin: 5px 0 6px; padding-left: 4px; }
.checks label { display: flex; align-items: center; gap: 2px; width: 101px; height: 10px; }
.checks input { width: 8px; height: 8px; padding: 0; border: 1px solid #999; background: #f8f8f8; }
.align { display: flex; justify-content: space-between; align-items: center; height: 10px; margin-bottom: 6px; color: #888; }
.align .flat { width: 93px; height: 10px; line-height: 8px; }
.relation { display: flex; align-items: center; justify-content: space-between; margin-top: 7px; }
.relation .drop { width: 155px; }
.actions { display: flex; align-items: center; height: 22px; margin: 1px -6px 0; padding: 0 9px 4px 5px; border-top: 1px solid #bbb; }
.actions > .i { width: 14px; height: 12px; margin-right: 5px; }
.actions .btn { width: 39px; margin-left: 10px; }
.actions .layer { width: 160px; height: 10px; margin: 0 5px 0 0; padding: 0 3px; justify-content: flex-start; gap: 1px; }
.layer .i { width: 9px; }
.actions .ok { border-color: #2a8dc4; background: linear-gradient(#f0faff, #b5e0f5); box-shadow: 0 0 1px 1px #7fd0f2; }

/* profile pop-up */
.popup { position: absolute; left: 687px; top: 138px; width: 117px; border: 1px solid #aaa; background: #fff; }
.popup .info { display: flex; gap: 3px; padding: 3px 3px 1px; border-bottom: 1px solid #999; }
.popup .preview { width: 65px; height: 66px; padding: 7px 8px; border: 1px solid #e2e2e2; }
.preview svg { display: block; width: 48px; height: 51px; }
.popup p { line-height: 9px; }
.doc { display: block; width: 4px; height: 6px; border: 1px solid #555; background: #ccc; }
.popup li { display: flex; align-items: center; gap: 2px; height: 11px; margin-top: -1px; margin-bottom: 1px; }
.popup li > i { width: 10px; text-align: center; font-weight: 700; }
.popup li span { width: 62px; }
.popup .i { width: 11px; height: 10px; }
.popup .selected { background: #3595f0; color: #fff; }
.popup .solid { fill: #fff; stroke: #fff; }

/* profile manager */
.palette { position: absolute; left: 885px; top: 95px; width: 133px; padding: 1px; border: 1px solid #8794a6; background: #f0f0f0; }
.cap { display: flex; align-items: center; justify-content: space-between; height: 11px; padding: 0 2px 0 1px; background: linear-gradient(#cbd8e6, #b7dcea); color: #4c5966; }
.palette h5 { display: flex; align-items: center; gap: 5px; height: 12px; padding-left: 4px; background: #d6d6d6; font-weight: 400; }
.palette h5.closed { height: 12px; color: #888; border-top: 1px solid #e4e4e4; }
.palette h5.closed .right { opacity: .5; }
.palette .content { padding: 5px 3px 3px; }
.choose { width: 100%; margin: 2px 0 5px; padding: 0 3px 0 15px; }
.edit { display: flex; gap: 5px; }
.thumb { width: 60px; height: 60px; padding: 5px 6px; border: 1px solid #999; border-right-color: #eee; border-bottom-color: #eee; background: #fff; flex: none; }
.thumb i { display: block; height: 49px; border: 1px solid #b09a90; background: radial-gradient(circle at 7px 12px, #333 1px, #fbd9c8 1px); }
.tools { flex: 1; display: flex; flex-direction: column; gap: 4px; }
.icons { display: flex; align-items: center; justify-content: space-between; height: 12px; padding: 0 2px; }
.icons span { font-size: 9px; }
.icons sup { font-size: 5px; vertical-align: 3px; }
.red { stroke: #e0301e; }
.tools p { margin-top: 4px; }
.uses { display: flex; justify-content: flex-end; gap: 1px; margin-top: -1px; }
.uses .flat { width: 15px; height: 13px; display: flex; align-items: center; justify-content: center; }
.palette hr { margin: 5px 0 3px; }
.pair { display: flex; gap: 6px; margin-top: 3px; }
.pair .flat { flex: 1; height: 13px; }
```
